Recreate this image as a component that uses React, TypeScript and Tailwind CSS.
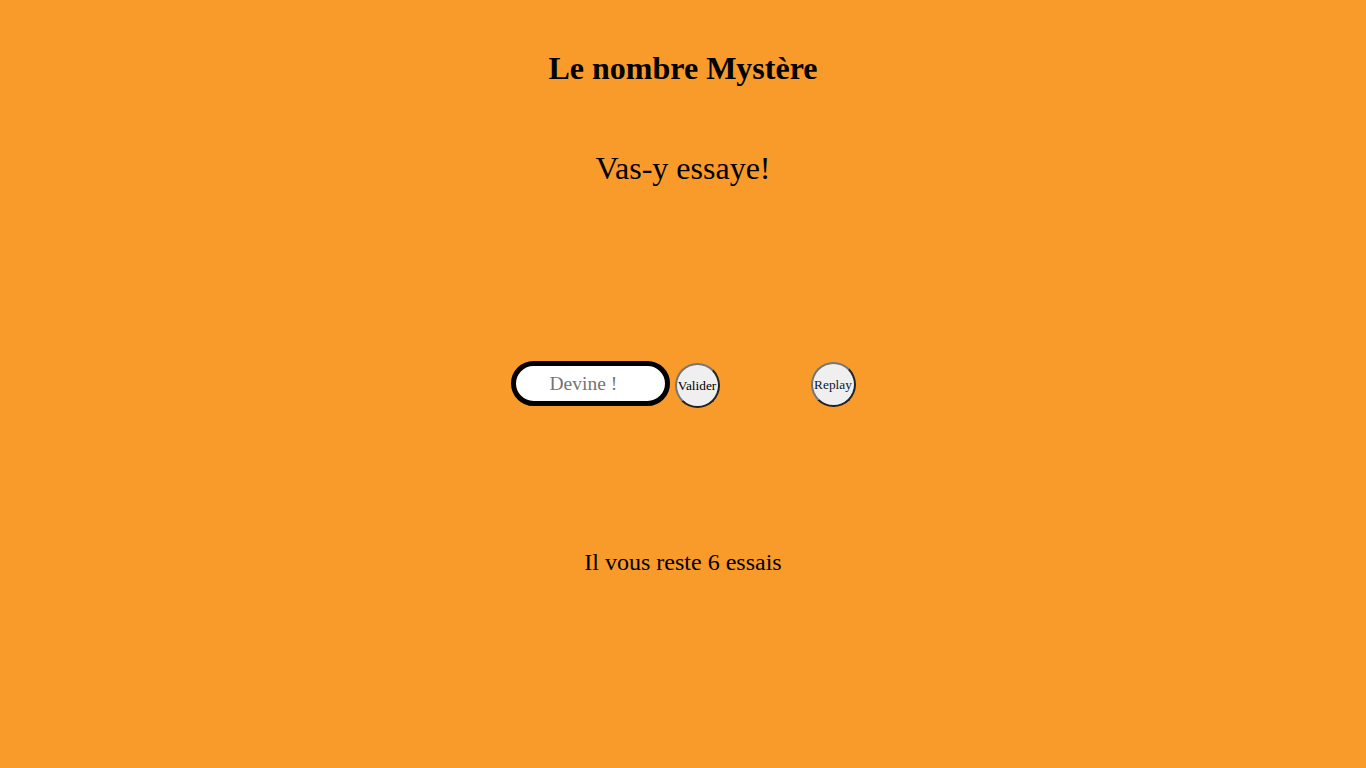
import { useState } from "react";

function App() {
    const [guess, setGuess] = useState("");
    const [tries] = useState(6);

    return (
        <div className="min-h-screen bg-[#f99b2b] text-black font-['Liberation_Serif',serif] flex flex-col items-center">
            <h1 className="mt-[50px] text-[32px] leading-[37px] font-bold">Le nombre Mystère</h1>

            <p className="mt-[63px] text-[32px] leading-[37px]">Vas-y essaye!</p>

            <div className="mt-[174px] flex items-start">
                <input
                    type="text"
                    value={guess}
                    onChange={(e) => setGuess(e.target.value)}
                    placeholder="Devine !"
                    className="w-[159px] h-[45px] border-[5px] border-black rounded-full bg-white pl-[34px] text-[19.5px] outline-none placeholder:text-[#757575]"
                />
                <button className="ml-[5px] mt-[2px] w-[45px] h-[45px] p-0 rounded-full bg-[#efefef] border-2 border-t-[#767676] border-l-[#767676] border-r-[#222] border-b-[#222] text-[13.33px] flex items-center justify-center">
                    Valider
                </button>
                <button className="ml-[91px] mt-[1px] w-[45px] h-[45px] p-0 rounded-full bg-[#efefef] border-2 border-t-[#767676] border-l-[#767676] border-r-[#222] border-b-[#222] text-[13.33px] text-[#111827] flex items-center justify-center">
                    Replay
                </button>
            </div>

            <p className="mt-[140px] text-[24px] leading-[28px]">Il vous reste {tries} essais</p>
        </div>
    );
}

export default App;
